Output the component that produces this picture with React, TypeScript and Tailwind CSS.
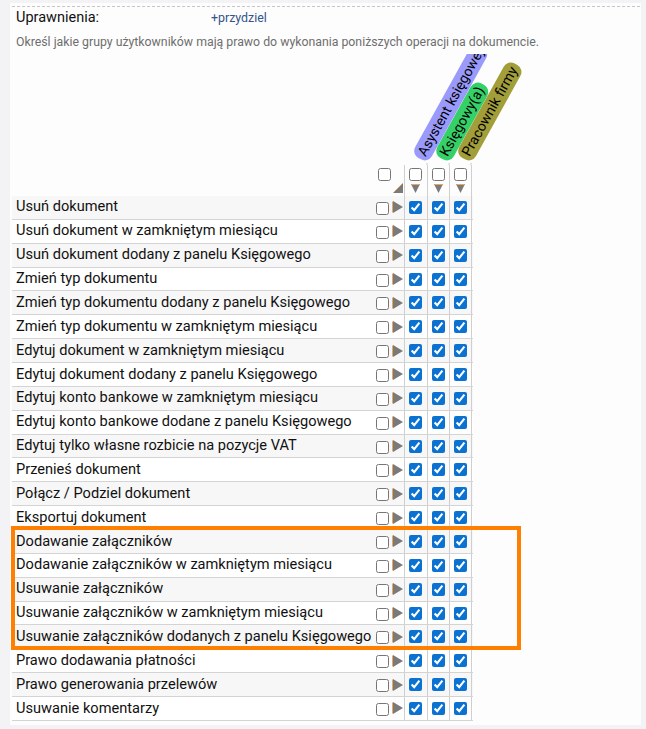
import React from 'react';

const permissions = [
  'Usuń dokument',
  'Usuń dokument w zamkniętym miesiącu',
  'Usuń dokument dodany z panelu Księgowego',
  'Zmień typ dokumentu',
  'Zmień typ dokumentu dodany z panelu Księgowego',
  'Zmień typ dokumentu w zamkniętym miesiącu',
  'Edytuj dokument w zamkniętym miesiącu',
  'Edytuj dokument dodany z panelu Księgowego',
  'Edytuj konto bankowe w zamkniętym miesiącu',
  'Edytuj konto bankowe dodane z panelu Księgowego',
  'Edytuj tylko własne rozbicie na pozycje VAT',
  'Przenieś dokument',
  'Połącz / Podziel dokument',
  'Eksportuj dokument',
  'Dodawanie załączników',
  'Dodawanie załączników w zamkniętym miesiącu',
  'Usuwanie załączników',
  'Usuwanie załączników w zamkniętym miesiącu',
  'Usuwanie załączników dodanych z panelu Księgowego',
  'Prawo dodawania płatności',
  'Prawo generowania przelewów',
  'Usuwanie komentarzy',
];

const groups = [
  { name: 'Asystent księgowej', color: 'bg-[#9a9afc]' },
  { name: 'Księgowy(a)', color: 'bg-[#36d068]' },
  { name: 'Pracownik firmy', color: 'bg-[#a29e3a]' },
];

const RightArrow = () => (
  <svg width="11" height="12" viewBox="0 0 11 12" className="shrink-0">
    <polygon points="1,0 11,6 1,12" fill="#7a7a7a" />
    <line x1="0.5" y1="0.5" x2="0.5" y2="11.5" stroke="#f0a45c" strokeWidth="1" />
  </svg>
);

const DownArrow = () => (
  <svg width="9" height="9" viewBox="0 0 9 9" className="shrink-0">
    <polygon points="0,0 9,0 4.5,9" fill="#7a7a7a" />
    <line x1="0.5" y1="0.5" x2="8.5" y2="0.5" stroke="#f0a45c" strokeWidth="1" />
  </svg>
);

const CornerArrow = () => (
  <svg width="10" height="10" viewBox="0 0 10 10" className="shrink-0">
    <polygon points="10,0 10,10 0,10" fill="#7a7a7a" />
    <line x1="0.5" y1="9.5" x2="9.5" y2="0.5" stroke="#f0a45c" strokeWidth="0.8" />
  </svg>
);

const Box = ({ checked = false, className = '' }: { checked?: boolean; className?: string }) => (
  <input type="checkbox" checked={checked} readOnly className={`m-0 w-[13px] h-[13px] accent-[#0b72d2] ${className}`} />
);

export default function App() {
  return (
    <div className="min-h-screen bg-[#f3f3f5] pl-[10px] pr-[5px] pt-[3px] pb-[4px] font-['Roboto',sans-serif]">
      <div className="bg-[#fdfdfd] pt-[3px] pb-[4px]">
        <div className="ml-[2px] h-px bg-[repeating-linear-gradient(to_right,#c6c6c6_0_3px,transparent_3px_5px)]" />

        <div className="flex items-center h-[22px] pl-[6px]">
          <span className="w-[195px] text-[14.5px] text-[#111]">Uprawnienia:</span>
          <span className="text-[12.4px] text-[#34558b]">+przydziel</span>
        </div>
        <p className="mt-[5px] pl-[6px] text-[12.3px] leading-[16px] text-[#6e6e6e]">
          Określ jakie grupy użytkowników mają prawo do wykonania poniższych operacji na dokumencie.
        </p>

        <div className="relative ml-[2px] mt-[4px]">
          {/* naglowek z obroconymi nazwami grup */}
          <div className="h-[142px] overflow-hidden flex items-end">
            <div className="w-[362px] shrink-0" />
            <div className="w-[30px] h-[31px] shrink-0 flex pl-[4px] pt-[3px]">
              <Box />
              <div className="self-end mb-[3px] ml-[2px]">
                <CornerArrow />
              </div>
            </div>
            {groups.map((g, i) => (
              <div
                key={g.name}
                className={`relative w-[22.5px] h-[31px] shrink-0 border-l border-[#cfcfcf] ${i === groups.length - 1 ? 'border-r' : ''} flex flex-col items-center pt-[3px]`}
              >
                <Box />
                <div className="mt-[3px]">
                  <DownArrow />
                </div>
                <div className="absolute left-full bottom-full origin-bottom-left -rotate-[61deg] flex items-end whitespace-nowrap">
                  <span className="w-[2px] h-px bg-[#c8c8c8]" />
                  <span className={`${g.color} rounded-[8px] px-[4px] text-[14px] leading-[19px] text-black`}>{g.name}</span>
                </div>
              </div>
            ))}
          </div>

          <div className="w-[460.5px]">
            {permissions.map((p, i) => (
              <div
                key={p}
                className={`flex h-[23.86px] border-b border-[#d4d4d4] ${i % 2 === 0 ? 'bg-[#f7f7f7]' : 'bg-white'}`}
              >
                <div className="w-[362px] shrink-0 pl-[4px] flex items-center text-[14.6px] text-[#111] whitespace-nowrap">{p}</div>
                <div className="w-[30px] shrink-0 flex items-center pl-[2px] gap-[3px]">
                  <Box className="mt-[2px]" />
                  <RightArrow />
                </div>
                {groups.map((g, j) => (
                  <div
                    key={g.name}
                    className={`w-[22.5px] shrink-0 border-l border-[#cfcfcf] ${j === groups.length - 1 ? 'border-r' : ''} flex items-center justify-center`}
                  >
                    <Box checked />
                  </div>
                ))}
              </div>
            ))}
          </div>

          {/* zaznaczenie */}
          <div className="absolute left-[-1px] top-[472px] w-[510px] h-[124px] border-4 border-[#ff7f00] pointer-events-none" />
        </div>
      </div>
    </div>
  );
}
